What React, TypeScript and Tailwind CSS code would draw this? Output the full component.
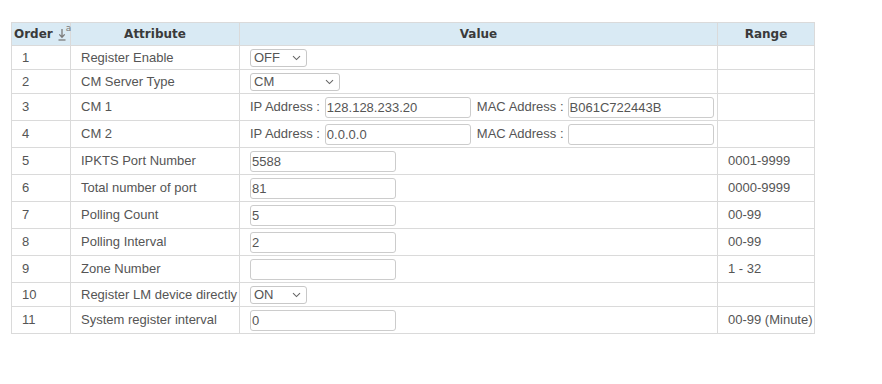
import React from "react";

type Row = {
  order: number;
  attr: string;
  value: React.ReactNode;
  range?: string;
  tall?: boolean;
};

const Chevron = () => (
  <svg width="9" height="6" viewBox="0 0 9 6" className="shrink-0">
    <path d="M1 1.2 L4.5 4.6 L8 1.2" fill="none" stroke="#666" strokeWidth="1.1" />
  </svg>
);

const Select = ({ value, width }: { value: string; width: string }) => (
  <div
    className={`flex h-[18px] items-center justify-between rounded-[3px] border border-[#c8c8c8] bg-white pl-[3px] pr-[5px] text-[13px] leading-none text-[#555] ${width}`}
  >
    <span>{value}</span>
    <Chevron />
  </div>
);

const TextBox = ({ value, width = "w-[146px]" }: { value: string; width?: string }) => (
  <div
    className={`flex h-[21px] items-center rounded-[3px] border border-[#cccccc] bg-white pl-[1px] text-[13px] leading-none text-[#555] ${width}`}
  >
    {value}
  </div>
);

const AddressPair = ({ ip, mac }: { ip: string; mac: string }) => (
  <div className="flex items-center">
    <span className="mr-[5px]">IP Address :</span>
    <TextBox value={ip} />
    <span className="ml-[6px] mr-[4px]">MAC Address :</span>
    <TextBox value={mac} />
  </div>
);

const rows: Row[] = [
  { order: 1, attr: "Register Enable", value: <Select value="OFF" width="w-[57px]" /> },
  { order: 2, attr: "CM Server Type", value: <Select value="CM" width="w-[90px]" /> },
  { order: 3, attr: "CM 1", value: <AddressPair ip="128.128.233.20" mac="B061C722443B" />, tall: true },
  { order: 4, attr: "CM 2", value: <AddressPair ip="0.0.0.0" mac="" />, tall: true },
  { order: 5, attr: "IPKTS Port Number", value: <TextBox value="5588" />, range: "0001-9999", tall: true },
  { order: 6, attr: "Total number of port", value: <TextBox value="81" />, range: "0000-9999", tall: true },
  { order: 7, attr: "Polling Count", value: <TextBox value="5" />, range: "00-99", tall: true },
  { order: 8, attr: "Polling Interval", value: <TextBox value="2" />, range: "00-99", tall: true },
  { order: 9, attr: "Zone Number", value: <TextBox value="" />, range: "1 - 32", tall: true },
  { order: 10, attr: "Register LM device directly", value: <Select value="ON" width="w-[57px]" /> },
  { order: 11, attr: "System register interval", value: <TextBox value="0" />, range: "00-99 (Minute)", tall: true },
];

const SortIcon = () => (
  <span className="ml-[5px] inline-flex items-start">
    <svg width="8" height="14" viewBox="0 0 8 14">
      <path d="M4 2 V10 M1.3 7.4 L4 10.2 L6.7 7.4" fill="none" stroke="#7a7a7a" strokeWidth="1.3" />
      <path d="M0.5 13 H7.5" stroke="#7a7a7a" strokeWidth="1.3" />
    </svg>
    <span className="-mt-[3px] text-[9px] font-normal leading-none text-[#7a7a7a]">a</span>
  </span>
);

export default function App() {
  return (
    <div className="min-h-[384px] w-[882px] bg-white pl-[11px] pt-[22px] font-['Liberation_Sans',Arial,sans-serif] text-[13px] text-[#555]">
      <table className="w-[803px] table-fixed border-collapse border border-[#dadada]">
        <colgroup>
          <col className="w-[59px]" />
          <col className="w-[169px]" />
          <col className="w-[478px]" />
          <col className="w-[97px]" />
        </colgroup>
        <thead>
          <tr className="h-[23px] bg-[#d9eaf4] font-['DejaVu_Sans',Verdana,sans-serif] text-[12px] font-bold text-[#3a3a3a]">
            <th className="border border-[#dadada] px-[2px] text-left">
              <span className="inline-flex items-center">
                Order
                <SortIcon />
              </span>
            </th>
            <th className="border border-[#dadada] text-center">Attribute</th>
            <th className="border border-[#dadada] text-center">Value</th>
            <th className="border border-[#dadada] text-center">Range</th>
          </tr>
        </thead>
        <tbody>
          {rows.map((r) => (
            <tr key={r.order} className={r.tall ? "h-[27px]" : "h-[24px]"}>
              <td className="border border-[#dadada] pl-[10px] align-middle">{r.order}</td>
              <td className="whitespace-nowrap border border-[#dadada] pl-[10px] align-middle">{r.attr}</td>
              <td className="border border-[#dadada] pl-[10px] align-middle">{r.value}</td>
              <td className="whitespace-nowrap border border-[#dadada] pl-[10px] align-middle">{r.range ?? ""}</td>
            </tr>
          ))}
        </tbody>
      </table>
    </div>
  );
}
